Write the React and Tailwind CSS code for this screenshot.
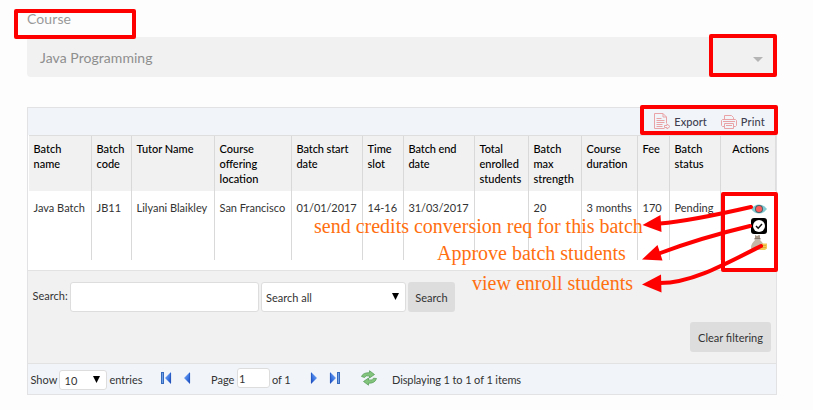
import React from "react";

const columns = [
  { head: ["Batch", "name"], value: "Java Batch", cell: "w-[63px]" },
  { head: ["Batch", "code"], value: "JB11", cell: "w-[40px]" },
  { head: ["Tutor Name"], value: "Lilyani Blaikley", cell: "w-[83px]" },
  { head: ["Course", "offering", "location"], value: "San Francisco", cell: "w-[77px]" },
  { head: ["Batch start", "date"], value: "01/01/2017", cell: "w-[71px] tracking-[-0.1px]" },
  { head: ["Time", "slot"], value: "14-16", cell: "w-[41px]" },
  { head: ["Batch end", "date"], value: "31/03/2017", cell: "w-[71px] tracking-[-0.1px]" },
  { head: ["Total", "enrolled", "students"], value: "", cell: "w-[54px]" },
  { head: ["Batch", "max", "strength"], value: "20", cell: "w-[53px]" },
  { head: ["Course", "duration"], value: "3 months", cell: "w-[56px]" },
  { head: ["Fee"], value: "170", cell: "w-[32px]" },
  { head: ["Batch", "status"], value: "Pending", cell: "w-[51px]" },
];

function ExportIcon() {
  return (
    <svg width="17" height="17" viewBox="0 0 17 17" fill="none" stroke="#e9a3a6" strokeWidth="1">
      <path d="M12.500 10.500V4L9 .5H.5v15h10M9 .5V4h3.500M2.500 5.500h5M2.500 7.500h8M2.500 9.500h8M2.500 11.500h6M2.500 13.500h6" />
      <path d="M10.500 12.500h2.500v-1.500l3 2.500-3 2.500v-1.500h-2.500z" />
    </svg>
  );
}

function PrintIcon() {
  return (
    <svg width="16" height="16" viewBox="0 0 16 16" fill="none" stroke="#e9a3a6" strokeWidth="1">
      <path d="M3.500 5.500V1.500h7l2 2v2M3.500 12.500H1.500l-1-1v-5l1-1h13l1 1v5l-1 1h-2M3.500 9.500h9v5h-9zM5 11.500h6M2 7.500h12" />
    </svg>
  );
}

function EyeIcon() {
  return (
    <svg width="16" height="10" viewBox="0 0 16 10">
      <path d="M0 5Q3.500 .4 8 .4T16 5Q12.500 9.600 8 9.600T0 5Z" fill="#82cad2" />
      <circle cx="8" cy="5" r="4" fill="#49616a" />
      <circle cx="8" cy="5" r="3" fill="#ff5c5c" />
    </svg>
  );
}

function ApproveIcon() {
  return (
    <svg width="16" height="16" viewBox="0 0 16 16">
      <rect width="16" height="16" rx="3" fill="#000" />
      <circle cx="8" cy="8" r="6" fill="#fff" />
      <path d="M5 8l2.200 2.200L11 6" fill="none" stroke="#111" strokeWidth="1.500" />
    </svg>
  );
}

function MoneyBagIcon() {
  return (
    <svg width="16" height="16" viewBox="0 0 16 16">
      <path d="M4 0l2 1 2-1 1 .5V3H4z" fill="#a69788" />
      <rect x="3.500" y="3" width="6" height="1.500" fill="#85776c" />
      <path d="M4.500 4.500h4C11 7 13 9 13 12q0 3-3 3H3q-3 0-3-3c0-3 2.500-5 4.500-7.500Z" fill="#c4b7a7" />
      <path d="M11 8.500h5v5l-2 1.500H9v-4z" fill="#f3c856" />
      <path d="M10 10.500h5M10 12.500h5" stroke="#d99d2c" strokeWidth=".7" />
    </svg>
  );
}

function PagerIcon({ bar, flip }) {
  return (
    <svg width="12" height="12" viewBox="0 0 12 12" className={flip ? "-scale-x-100" : ""}>
      <defs>
        <linearGradient id="pagerBlue" x1="0" y1="0" x2="1" y2="1">
          <stop offset="0" stopColor="#8fb5f2" />
          <stop offset=".55" stopColor="#3f79e4" />
          <stop offset="1" stopColor="#1641b5" />
        </linearGradient>
      </defs>
      {bar && <path d="M1 0h3v12H1z" fill="#3569bd" />}
      {bar && <path d="M2 1h1v10H2z" fill="#70a0e5" />}
      <path d="M5 6l6-6v12z" fill="url(#pagerBlue)" />
      <path d="M10.600 1v10" stroke="#2456bd" strokeWidth=".8" />
    </svg>
  );
}

function RefreshIcon() {
  return (
    <svg width="16" height="16" viewBox="0 0 16 16" fill="#83c47c" stroke="#4f9650" strokeWidth=".7">
      <path d="M.5 6.500Q2 2.500 8.500 2.700V.7L13.500 4.500 8.500 8V6Q4.500 5 3.500 7.500Z" />
      <path d="M15.500 8.500Q14 13.500 7.500 13.200v2L2.500 11.500l5-3.500v2q4 .8 5-1.800Z" />
    </svg>
  );
}

function SelectArrow() {
  return (
    <svg width="7" height="7" viewBox="0 0 7 7" className="-mt-px">
      <path d="M0 0h7L3.500 7z" fill="#000" />
    </svg>
  );
}

function Annotations() {
  const note = "absolute whitespace-nowrap font-['Liberation_Serif',serif] text-[20px] leading-[24px] text-[#ff6f10]";
  return (
    <div className="pointer-events-none absolute inset-0">
      <div className="absolute top-[9px] left-[14px] h-[30px] w-[122px] rounded-[2px] border-4 border-[#f00]" />
      <div className="absolute top-[34px] left-[709px] h-[43px] w-[68px] rounded-[2px] border-4 border-[#f00]" />
      <div className="absolute top-[105px] left-[640px] h-[30px] w-[138px] rounded-[2px] border-4 border-[#f00]" />
      <div className="absolute top-[192px] left-[721px] h-[80px] w-[57px] rounded-[2px] border-4 border-[#f00]" />
      <span className={`${note} top-[214px] left-[314px]`}>send credits conversion req for this batch</span>
      <span className={`${note} top-[241px] left-[437px]`}>Approve batch students</span>
      <span className={`${note} top-[271px] left-[472px]`}>view enroll students</span>
      <svg className="absolute inset-0" width="813" height="410" fill="none" stroke="#f00" strokeWidth="4" strokeLinecap="round">
        <path d="M751 207Q690 221 660 223.500M750 226Q700 238 659 253.500M761 246C720 267 690 283 660 283" />
        <g fill="#f00" stroke="none">
          <path d="M642.500 225l18-10 1 17z" />
          <path d="M642 259.500l15.500-14.500 5 15.500z" />
          <path d="M642 284.500l19-10 .5 18z" />
        </g>
      </svg>
    </div>
  );
}

export default function App() {
  return (
    <div className="relative h-[410px] w-[813px] overflow-hidden bg-[#fdfdfd] pt-[9px] pl-[27px] font-[Lato,sans-serif] text-[11px] leading-[15px] text-[#333]">
      <div className="h-[28px] text-[14px] leading-[19px] tracking-[0.1px] text-[#999]">Course</div>
      <div className="flex h-[40px] w-[750px] items-center justify-between rounded bg-[#f1f1f1] pr-[14px] pl-[13px] text-[14px] text-[#8e8e8e]">
        <span className="tracking-[0.05px]">Java Programming</span>
        <svg width="10" height="5" viewBox="0 0 10 5" className="mt-[5px]">
          <path d="M0 0h10L5 5z" fill="#b5b5b5" />
        </svg>
      </div>

      <div className="mt-[30px] h-[288px] w-[750px] border border-[#e2e2e4] bg-white">
        <div className="flex h-[27px] items-center justify-end bg-[#f1f5fa] pr-[11px] font-medium text-[#404050]">
          <ExportIcon />
          <span className="mr-[14px] ml-[3px]">Export</span>
          <PrintIcon />
          <span className="ml-[4px] tracking-[0.2px]">Print</span>
        </div>
        <div className="ml-px h-[135px]">
          <div className="flex h-[56px] border-t border-[#dedede] bg-[#f1f1f1] font-medium text-black">
            {columns.map((column, index) => (
              <div key={index} className={`${column.cell} shrink-0 border-r border-[#d9d9d9] pt-[5px] pl-[4.500px] whitespace-nowrap`}>
                {column.head.map((line) => (
                  <div key={line}>{line}</div>
                ))}
              </div>
            ))}
            <div className="flex-1 border-r border-[#dedede] pt-[5px] pr-[6px] text-right">Actions</div>
          </div>
          <div className="flex h-[69px]">
            {columns.map((column, index) => (
              <div key={index} className={`${column.cell} shrink-0 border-r border-[#d9d9d9] pt-[9px] pl-[4.500px] whitespace-nowrap`}>
                {column.value}
              </div>
            ))}
            <div className="flex flex-1 flex-col items-end pt-[13px] pr-[9px]">
              <EyeIcon />
              <div className="mt-[4px]"><ApproveIcon /></div>
              <div className="mt-px"><MoneyBagIcon /></div>
            </div>
          </div>
        </div>
        <div className="h-[93px] border-t border-[#e2e2e2] bg-[#f1f1f1] pt-[11px] pr-[5px] pl-[4.500px]">
          <div className="flex">
            <span className="w-[37.500px] pt-[6px]">Search:</span>
            <div className="h-[30px] w-[189px] rounded-[3px] border border-[#ddd] bg-white" />
            <div className="ml-[2px] flex h-[30px] w-[145px] items-center justify-between rounded-[3px] border border-[#ddd] bg-white pr-[6px] pl-[4px]">
              <span className="pt-px">Search all</span>
              <SelectArrow />
            </div>
            <button className="ml-[2px] h-[30px] w-[47px] rounded-[3px] bg-[#ddd] pt-px">Search</button>
          </div>
          <div className="mt-[10px] flex justify-end">
            <button className="h-[30px] w-[81px] rounded-[3px] bg-[#ddd] pt-px">Clear filtering</button>
          </div>
        </div>
        <div className="flex h-[31px] items-center border-t border-[#e2e2e2] bg-[#f1f5fa] pl-[2.500px]">
          <span className="w-[28.500px]">Show</span>
          <div className="mt-[2px] flex h-[20px] w-[48px] items-center justify-between rounded-[3px] border border-[#ddd] bg-white pr-[6px] pl-[4.500px]">
            <span className="pt-px">10</span>
            <SelectArrow />
          </div>
          <span className="ml-[2.500px] w-[50.500px]">entries</span>
          <div className="-mt-[2px]"><PagerIcon bar /></div>
          <div className="-mt-[2px] ml-[7px]"><PagerIcon /></div>
          <span className="ml-[20px] w-[26px]">Page</span>
          <div className="-mt-[2px] h-[20px] w-[33px] rounded-[3px] border border-[#ddd] bg-white pt-[3px] pl-px leading-[13px]">1</div>
          <span className="ml-[2px] w-[38px] tracking-[-0.1px]">of 1</span>
          <div className="-mt-[2px]"><PagerIcon flip /></div>
          <div className="-mt-[2px] ml-[7px]"><PagerIcon bar flip /></div>
          <div className="-mt-[2px] ml-[20px]"><RefreshIcon /></div>
          <span className="ml-[15px] tracking-[-0.11px]">Displaying 1 to 1 of 1 items</span>
        </div>
      </div>
      <Annotations />
    </div>
  );
}
